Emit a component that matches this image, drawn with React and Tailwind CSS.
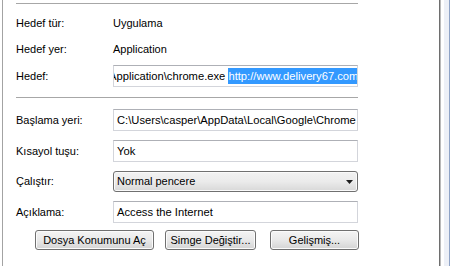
export default function App() {
  const font = { fontFamily: '"Liberation Sans", Arial, sans-serif' }
  const input = 'h-[22px] w-[245px] border border-[#d3d5db] border-t-[#aeb0b6] bg-white flex items-center px-[3px] overflow-hidden whitespace-nowrap text-[11.2px] text-black'
  const btn = 'h-[20px] flex items-center justify-center rounded-[3px] border border-[#707070] bg-gradient-to-b from-[#f4f4f4] via-[#e9e9e9] to-[#d4d4d4] text-[11px] text-black shadow-[inset_0_0_0_1px_#fbfbfb]'

  return (
    <div className="w-[450px] h-[266px] bg-white flex overflow-hidden" style={font}>
      {/* main panel */}
      <div className="w-[439px] h-full pl-[2px]">
        <div className="h-full border-l border-[#a3a3a3] pl-[13px] pt-[3px] flex flex-col">
          <div className="w-[342px] h-px bg-[#a7a7a7]" />

          <div className="mt-[8px] h-[22px] flex items-center text-[11px] text-black">
            <span className="w-[97px]">Hedef tür:</span>
            <span>Uygulama</span>
          </div>
          <div className="mt-[4px] h-[22px] flex items-center text-[11px] text-black">
            <span className="w-[97px]">Hedef yer:</span>
            <span>Application</span>
          </div>
          <div className="mt-[5px] flex items-center text-[11px]">
            <span className="w-[97px]">Hedef:</span>
            <div className={input + ' pl-0'}>
              <span className="-ml-[5px]">Application\chrome.exe&nbsp;</span>
              <span className="bg-[#3399ff] text-white">http://www.delivery67.com</span>
            </div>
          </div>

          <div className="mt-[10px] w-[342px] h-px bg-[#a7a7a7]" />

          <div className="mt-[11px] flex items-center text-[11px]">
            <span className="w-[97px]">Başlama yeri:</span>
            <div className={input}>C:\Users\casper\AppData\Local\Google\Chrome</div>
          </div>
          <div className="mt-[9px] flex items-center text-[11px]">
            <span className="w-[97px]">Kısayol tuşu:</span>
            <div className={input}>Yok</div>
          </div>
          <div className="mt-[9px] flex items-center text-[11px]">
            <span className="w-[97px]">Çalıştır:</span>
            <div className="h-[21px] w-[245px] rounded-[3px] border border-[#707070] bg-gradient-to-b from-[#f2f2f2] via-[#ebebeb] to-[#d8d8d8] flex items-center justify-between pl-[3px] pr-[4px] shadow-[inset_0_0_0_1px_#fafafa]">
              <span>Normal pencere</span>
              <svg width="7" height="4" viewBox="0 0 7 4">
                <path d="M0 0h7L3.5 4z" fill="#1e1e1e" />
              </svg>
            </div>
          </div>
          <div className="mt-[9px] flex items-center text-[11px]">
            <span className="w-[97px]">Açıklama:</span>
            <div className={input}>Access the Internet</div>
          </div>

          <div className="mt-[7px] flex">
            <div className={btn + ' ml-[19px] w-[119px]'}>Dosya Konumunu Aç</div>
            <div className={btn + ' ml-[11px] w-[91px]'}>Simge Değiştir...</div>
            <div className={btn + ' ml-[14px] w-[89px]'}>Gelişmiş...</div>
          </div>
        </div>
      </div>

      {/* right frame edge */}
      <div className="w-px h-full bg-[#6e6e6e]" />
      <div className="w-px h-full bg-[#b9b9b9]" />
      <div className="w-[3px] h-full bg-white" />
      <div className="w-[5px] h-full bg-[#edf0f7]" />
      <div className="w-px h-full bg-[#8fa3c6]" />
    </div>
  )
}
